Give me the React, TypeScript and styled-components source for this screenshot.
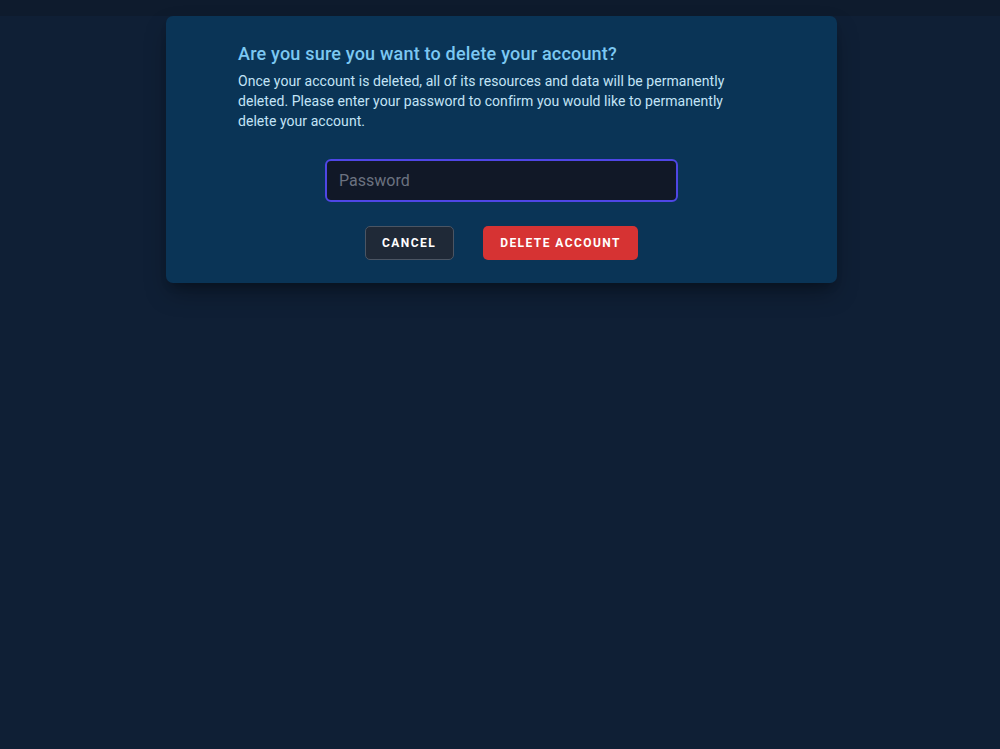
import React from "react";
import styled, { createGlobalStyle } from "styled-components";

const Global = createGlobalStyle`
  html, body { margin: 0; padding: 0; }
  body { background: #0f1f35; font-family: Roboto, "Liberation Sans", sans-serif; }
`;

const Page = styled.div`
  min-height: 749px;
  display: flex;
  flex-direction: column;
`;

const TopBar = styled.div`
  height: 16px;
  background: #0e1b2d;
`;

const Stage = styled.div`
  display: flex;
  justify-content: center;
  padding-left: 3px;
`;

const Modal = styled.div`
  width: 671px;
  box-sizing: border-box;
  background: #0a3456;
  border-radius: 7px;
  padding: 24px 72px 23px;
  box-shadow: 0 12px 24px -4px rgba(0, 0, 0, 0.35), 0 6px 10px -4px rgba(0, 0, 0, 0.2);
`;

const Title = styled.h2`
  margin: 0;
  font-size: 18px;
  line-height: 28px;
  font-weight: 500;
  letter-spacing: 0.2px;
  color: #7cc8f2;
`;

const Body = styled.p`
  margin: 3px 0 0;
  max-width: 496px;
  font-size: 14px;
  line-height: 20px;
  color: #c3e4f7;
  letter-spacing: 0.05px;
`;

const Field = styled.div`
  display: flex;
  justify-content: center;
  margin-top: 28px;
`;

const Input = styled.input`
  width: 353px;
  height: 43px;
  box-sizing: border-box;
  background: #111827;
  border: 2px solid #4f46e5;
  border-radius: 6px;
  padding: 0 12px;
  font-family: Roboto, "Liberation Sans", sans-serif;
  font-size: 16px;
  color: #e5e7eb;
  outline: none;
  &::placeholder { color: #6b7280; }
`;

const Actions = styled.div`
  display: flex;
  justify-content: center;
  gap: 29px;
  margin-top: 24px;
`;

const Button = styled.button<{ $danger?: boolean }>`
  height: 34px;
  box-sizing: border-box;
  padding: 0 16.5px;
  border-radius: 5px;
  border: 1px solid ${p => (p.$danger ? "transparent" : "#4b5563")};
  background: ${p => (p.$danger ? "#d63333" : "#1f2937")};
  color: #ffffff;
  font-family: Roboto, "Liberation Sans", sans-serif;
  font-size: 12px;
  font-weight: 700;
  letter-spacing: 0.12em;
  text-transform: uppercase;
  cursor: pointer;
`;

export default function App() {
  return (
    <Page>
      <Global />
      <TopBar />
      <Stage>
        <Modal>
          <Title>Are you sure you want to delete your account?</Title>
          <Body>
            Once your account is deleted, all of its resources and data will be permanently
            deleted. Please enter your password to confirm you would like to permanently
            delete your account.
          </Body>
          <Field>
            <Input type="password" placeholder="Password" />
          </Field>
          <Actions>
            <Button>Cancel</Button>
            <Button $danger>Delete Account</Button>
          </Actions>
        </Modal>
      </Stage>
    </Page>
  );
}
